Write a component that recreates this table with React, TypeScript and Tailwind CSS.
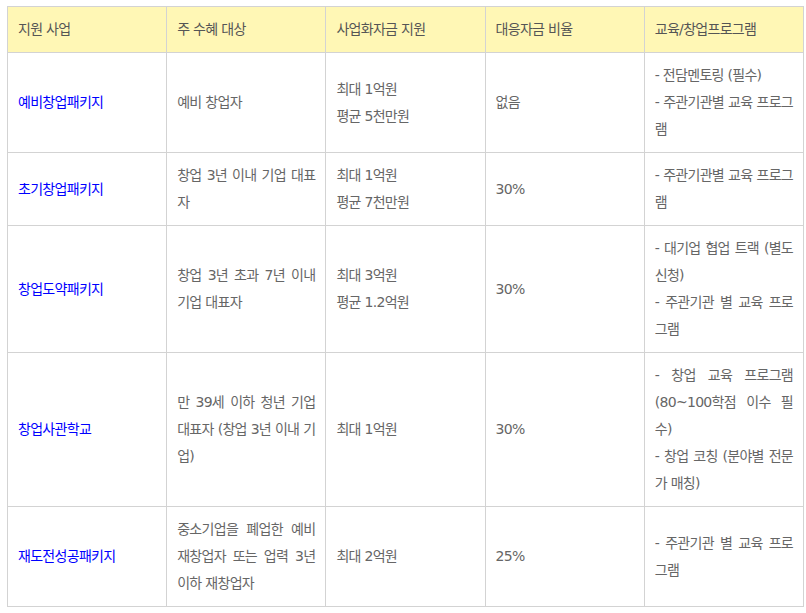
import React from 'react';

type Row = {
  name: string;
  target: string;
  fund: string[];
  ratio: string;
  program: string[];
};

const rows: Row[] = [
  {
    name: '예비창업패키지',
    target: '예비 창업자',
    fund: ['최대 1억원', '평균 5천만원'],
    ratio: '없음',
    program: ['- 전담멘토링 (필수)', '- 주관기관별 교육 프로그램'],
  },
  {
    name: '초기창업패키지',
    target: '창업 3년 이내 기업 대표자',
    fund: ['최대 1억원', '평균 7천만원'],
    ratio: '30%',
    program: ['- 주관기관별 교육 프로그램'],
  },
  {
    name: '창업도약패키지',
    target: '창업 3년 초과 7년 이내 기업 대표자',
    fund: ['최대 3억원', '평균 1.2억원'],
    ratio: '30%',
    program: ['- 대기업 협업 트랙 (별도 신청)', '- 주관기관 별 교육 프로그램'],
  },
  {
    name: '창업사관학교',
    target: '만 39세 이하 청년 기업 대표자 (창업 3년 이내 기업)',
    fund: ['최대 1억원'],
    ratio: '30%',
    program: ['- 창업 교육 프로그램 (80~100학점 이수 필수)', '- 창업 코칭 (분야별 전문가 매칭)'],
  },
  {
    name: '재도전성공패키지',
    target: '중소기업을 폐업한 예비 재창업자 또는 업력 3년 이하 재창업자',
    fund: ['최대 2억원'],
    ratio: '25%',
    program: ['- 주관기관 별 교육 프로그램'],
  },
];

const headers = ['지원 사업', '주 수혜 대상', '사업화자금 지원', '대응자금 비율', '교육/창업프로그램'];

const cell = 'border border-[#d3d3d3] px-[10px] py-[9px] align-middle';

export default function App() {
  return (
    <div className="bg-white w-[806px] h-[613px] pt-[6px] pl-[7px] text-[14px] leading-[27px] tracking-[-0.7px] text-[#666] font-['DejaVu_Sans','Noto_Sans_CJK_KR',sans-serif]">
      <table className="w-[797px] table-fixed border-collapse">
        <thead>
          <tr className="bg-[#fff7b5]">
            {headers.map((h) => (
              <th key={h} className={`${cell} text-left font-normal text-[#555]`}>
                {h}
              </th>
            ))}
          </tr>
        </thead>
        <tbody>
          {rows.map((r) => (
            <tr key={r.name}>
              <td className={`${cell} text-[#0000ff]`}>{r.name}</td>
              <td className={`${cell} text-justify`}>{r.target}</td>
              <td className={cell}>
                {r.fund.map((f) => (
                  <div key={f}>{f}</div>
                ))}
              </td>
              <td className={cell}>{r.ratio}</td>
              <td className={`${cell} text-justify`}>
                {r.program.map((p) => (
                  <p key={p}>{p}</p>
                ))}
              </td>
            </tr>
          ))}
        </tbody>
      </table>
    </div>
  );
}
